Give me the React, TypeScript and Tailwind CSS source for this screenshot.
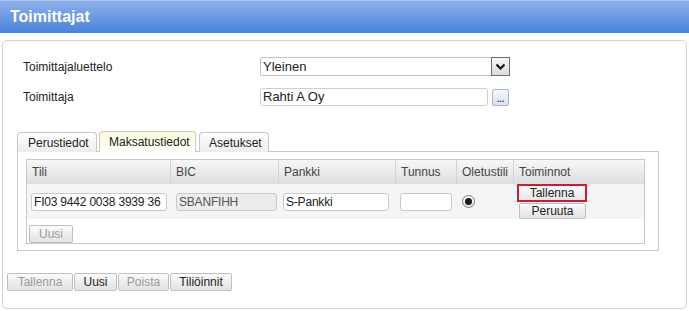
import React from 'react';

const btn =
  'h-[18px] px-[7px] border border-[#bfbfbf] rounded-[2px] bg-gradient-to-b from-[#fbfbfb] to-[#e2e2e2] text-[12px] leading-[16px]';

function Input({ w, value, gray }: { w: string; value?: string; gray?: boolean }) {
  return (
    <div
      className={`${w} h-[18px] border border-[#c9c9c9] rounded-[3px] px-[2px] text-[12px] leading-[16px] whitespace-nowrap overflow-hidden tracking-[-0.2px] ${
        gray ? 'bg-[#ececec] text-[#555]' : 'bg-white text-[#222]'
      }`}
    >
      {value}
    </div>
  );
}

export default function App() {
  const cols = ['Tili', 'BIC', 'Pankki', 'Tunnus', 'Oletustili', 'Toiminnot'];

  return (
    <div className="w-[689px] h-[311px] bg-white text-[12px] text-[#222] font-['Liberation_Sans',Arial,sans-serif] overflow-hidden">
      {/* title bar */}
      <div className="h-[33px] bg-gradient-to-b from-[#8db0ea] to-[#4783da] border-t border-[#a9c3ee] flex items-center pl-[10px]">
        <span className="text-white font-bold text-[16px]">Toimittajat</span>
      </div>

      <div className="px-[2px] pt-[7px]">
        <div className="h-[269px] border border-[#d2d4cf] rounded-[5px]">
          {/* form rows */}
          <div className="pl-[20px] pt-[16px]">
            <div className="flex items-center h-[19px]">
              <span className="w-[237px]">Toimittajaluettelo</span>
              <div className="w-[250px] h-[19px] border border-[#c2c2c2] rounded-[2px] flex items-center justify-between bg-white">
                <span className="pl-[2px] text-[13px]">Yleinen</span>
                <div className="w-[19px] h-[19px] -mr-[1px] border border-[#6e6e6e] bg-gradient-to-b from-[#f6f6f6] to-[#dcdcdc] flex items-center justify-center">
                  <svg width="11" height="8" viewBox="0 0 11 8">
                    <path d="M1.5 1.5 L5.5 5.5 L9.5 1.5" fill="none" stroke="#111" strokeWidth="2" />
                  </svg>
                </div>
              </div>
            </div>
            <div className="flex items-center h-[18px] mt-[12px]">
              <span className="w-[237px]">Toimittaja</span>
              <div className="w-[228px] h-[18px] border border-[#cfcfcf] rounded-[3px] bg-white pl-[2px] text-[13px] leading-[16px]">
                Rahti A Oy
              </div>
              <div className="ml-[4px] w-[17px] h-[17px] border border-[#a7b6cc] rounded-[2px] bg-gradient-to-b from-[#f7f9fd] to-[#d7e1f0] flex items-end justify-center pb-[3px]">
                <span className="text-[9px] leading-[6px] font-bold text-[#1d3b6b]">...</span>
              </div>
            </div>
          </div>

          {/* tabs */}
          <div className="ml-[14px] mt-[25px]">
            <div className="flex items-end h-[21px]">
              <div className="w-[80px] h-[20px] border border-b-0 border-[#c8c8c8] rounded-t-[4px] bg-gradient-to-b from-[#ffffff] to-[#ececec] flex items-center pl-[10px]">
                Perustiedot
              </div>
              <div className="ml-[2px] w-[97px] h-[21px] border border-b-0 border-[#c8c8c8] rounded-t-[4px] bg-gradient-to-b from-[#f9fbd8] to-[#ffffff] flex items-center pl-[9px] relative z-10">
                Maksatustiedot
              </div>
              <div className="ml-[3px] w-[70px] h-[20px] border border-b-0 border-[#c8c8c8] rounded-t-[4px] bg-gradient-to-b from-[#ffffff] to-[#ececec] flex items-center pl-[9px]">
                Asetukset
              </div>
            </div>
            <div className="w-[642px] h-[100px] -mt-[1px] border border-[#c8c8c8] pl-[8px] pt-[7px]">
              <div className="w-[619px] h-[85px] border border-[#c8c8c8]">
                <div className="grid grid-cols-[144px_108px_117px_61px_57px_1fr] h-[24px] bg-gradient-to-b from-[#f7f7f7] to-[#dedede] text-[#444]">
                  {cols.map((c, i) => (
                    <div
                      key={c}
                      className={`flex items-center pl-[5px] ${i < 5 ? 'border-r border-[#d4d4d4]' : ''}`}
                    >
                      {c}
                    </div>
                  ))}
                </div>
                <div className="grid grid-cols-[144px_108px_117px_61px_57px_1fr] h-[35px] bg-[#f5f5f7] items-center">
                  <div className="pl-[4px]">
                    <Input w="w-[136px]" value="FI03 9442 0038 3939 36" />
                  </div>
                  <div className="pl-[5px]">
                    <Input w="w-[101px]" value="SBANFIHH" gray />
                  </div>
                  <div className="pl-[4px]">
                    <Input w="w-[106px]" value="S-Pankki" />
                  </div>
                  <div className="pl-[4px]">
                    <Input w="w-[52px]" />
                  </div>
                  <div className="pl-[5px]">
                    <div className="w-[13px] h-[13px] rounded-full border border-[#7a7a7a] bg-gradient-to-b from-[#ffffff] to-[#e4e4e4] flex items-center justify-center">
                      <div className="w-[7px] h-[7px] rounded-full bg-[#1a1a1a]" />
                    </div>
                  </div>
                  <div className="pl-[3px] flex flex-col">
                    <div className="w-[70px] h-[18px] border-2 border-[#d5192b] bg-gradient-to-b from-[#fbfbfb] to-[#e6e6e6] flex items-center justify-center text-[#222]">
                      Tallenna
                    </div>
                    <div className="ml-[2px] mt-[1px] w-[67px] h-[16px] border border-[#bfbfbf] rounded-[2px] bg-gradient-to-b from-[#fbfbfb] to-[#e2e2e2] flex items-center justify-center">
                      Peruuta
                    </div>
                  </div>
                </div>
                <div className="pl-[2px] pt-[6px]">
                  <button className={`${btn} w-[44px] text-[#9a9a9a] px-0`}>Uusi</button>
                </div>
              </div>
            </div>
          </div>

          {/* bottom buttons */}
          <div className="ml-[4px] mt-[22px] flex gap-[1px]">
            <button className={`${btn} w-[66px] text-[#9a9a9a]`}>Tallenna</button>
            <button className={`${btn} w-[43px]`}>Uusi</button>
            <button className={`${btn} w-[51px] text-[#9a9a9a]`}>Poista</button>
            <button className={`${btn} w-[62px]`}>Tiliöinnit</button>
          </div>
        </div>
      </div>
    </div>
  );
}
